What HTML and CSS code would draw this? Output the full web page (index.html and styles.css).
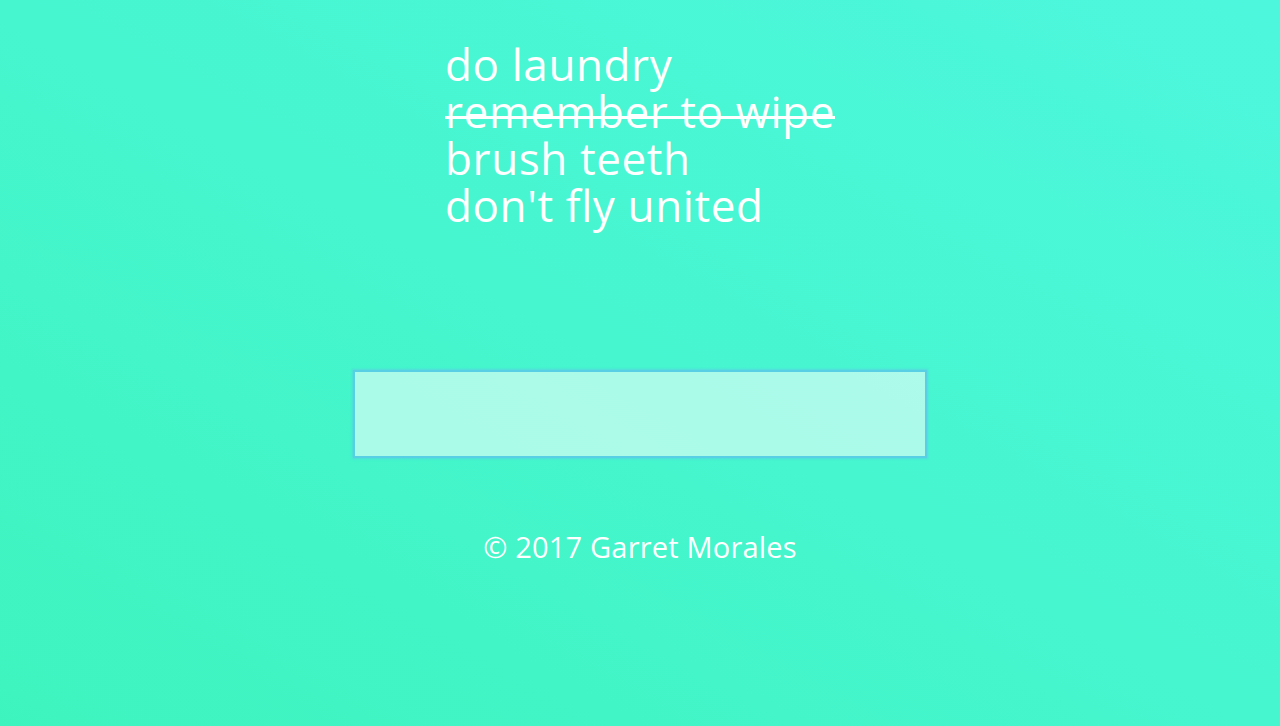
FILE: index.html
```html
<!DOCTYPE html>
<html>
<head>
<meta charset="utf-8">
<link rel="stylesheet" href="styles.css">
</head>
<body>
<main class="page">
  <ul class="todos">
    <li class="todo"><span class="label">do laundry</span></li>
    <li class="todo"><span class="label done">remember to wipe</span></li>
    <li class="todo"><span class="label">brush teeth</span></li>
    <li class="todo"><span class="label">don't fly united</span></li>
  </ul>
  <input class="new-todo" type="text">
  <footer class="footer">© 2017 Garret Morales</footer>
</main>
</body>
</html>
```
FILE: styles.css
```css
html, body {
  margin: 0;
  height: 100%;
}
body {
  background: linear-gradient(to top right, #3ef4be 0%, #46f6cf 50%, #4df7dd 100%);
  font-family: "Open Sans", "DejaVu Sans", sans-serif;
  color: #ffffff;
}
.page {
  display: flex;
  flex-direction: column;
  align-items: center;
  padding-top: 41px;
}
.todos {
  list-style: none;
  margin: 0;
  padding: 0;
  width: fit-content;
}
.todo {
  font-size: 44px;
  font-weight: 400;
  line-height: 47px;
  letter-spacing: 0.6px;
}
.label {
  display: inline-block;
}
.done {
  background: linear-gradient(#ffffff, #ffffff) no-repeat 0 28px / 100% 3px;
}
.new-todo {
  margin-top: 141px;
  width: 574px;
  height: 88px;
  box-sizing: border-box;
  background: rgba(255, 255, 255, 0.55);
  border: 2px solid #58cfe4;
  outline: none;
  box-shadow: 0 0 2px 1px rgba(88, 207, 228, 0.75);
}
.footer {
  margin-top: 69px;
  font-size: 29px;
  font-weight: 400;
  letter-spacing: 0.2px;
}
```
